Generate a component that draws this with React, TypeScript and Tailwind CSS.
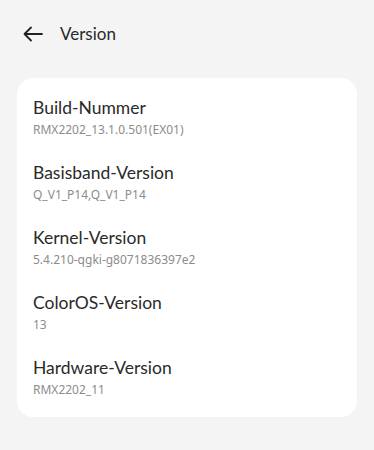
const items = [
  { title: "Build-Nummer", value: "RMX2202_13.1.0.501(EX01)" },
  { title: "Basisband-Version", value: "Q_V1_P14,Q_V1_P14" },
  { title: "Kernel-Version", value: "5.4.210-qgki-g8071836397e2" },
  { title: "ColorOS-Version", value: "13" },
  { title: "Hardware-Version", value: "RMX2202_11" },
];

export default function App() {
  return (
    <div className="w-[374px] h-[450px] bg-[#f4f4f4] font-['Noto_Sans',sans-serif] overflow-hidden">
      <div className="flex items-center h-[68px] pl-[23px]">
        <svg width="20" height="16" viewBox="0 0 20 16" fill="none" stroke="#222" strokeWidth="1.8" strokeLinecap="round" strokeLinejoin="round">
          <path d="M19 8H1.5M8 1.5L1.5 8L8 14.5" />
        </svg>
        <span className="ml-[17px] text-[17px] text-[#2a2a2a] leading-[22px] font-['Lato',sans-serif]">Version</span>
      </div>
      <div className="mx-[17px] mt-[10px] bg-white rounded-[16px] pt-[19px] pb-[19px] px-[16px] flex flex-col gap-[24px]">
        {items.map((it) => (
          <div key={it.title} className="flex flex-col">
            <span className="text-[17.5px] leading-[22px] text-[#2a2a2a] font-['Lato',sans-serif]">{it.title}</span>
            <span className="mt-[3px] text-[12px] leading-[16px] text-[#8c8c8c]">{it.value}</span>
          </div>
        ))}
      </div>
    </div>
  );
}
